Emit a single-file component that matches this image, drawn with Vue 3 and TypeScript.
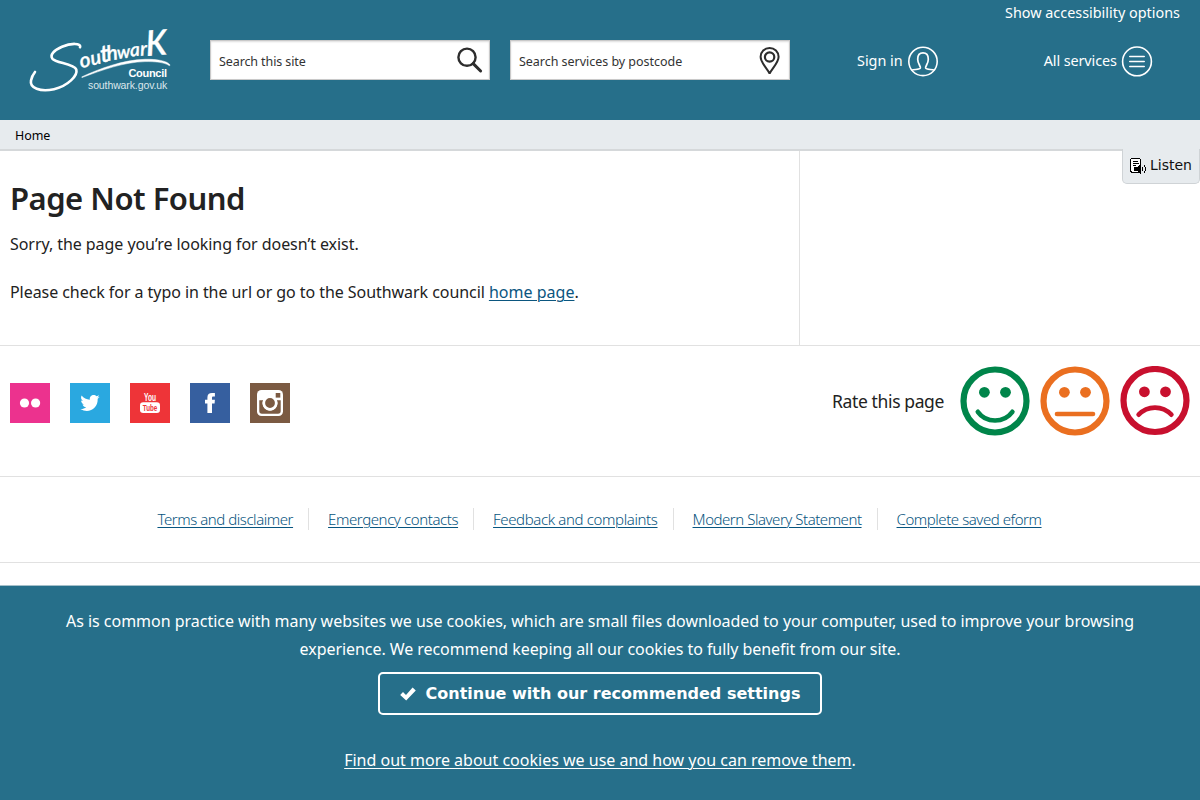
<script setup lang="ts">
interface FooterLink { label: string; tight: string }

const footerLinks: FooterLink[] = [
  { label: 'Terms and disclaimer', tight: 'terms' },
  { label: 'Emergency contacts', tight: 'emergency' },
  { label: 'Feedback and complaints', tight: 'feedback' },
  { label: 'Modern Slavery Statement', tight: 'slavery' },
  { label: 'Complete saved eform', tight: 'eform' },
]
</script>

<template>
  <div class="page">
    <header class="header">
      <svg class="logo" viewBox="0 0 160 80" width="160" height="80" role="img" aria-label="Southwark Council">
        <path class="swash" d="M60 27.2 C61.5 23 51 22.8 42 26.8 C34 30.3 29.5 35 32.5 38.8 C36 43 54 43.5 56.3 49.5 C58 55.5 48 66 34 69.2 C20 72.2 9.5 68 11 60.5 C11.6 57.5 13.2 54.2 15 52" />
        <path class="tail" d="M61.7 56.9 C80 48.5 103 39.9 125 39.3 C137 39 147 41 149.8 44.6 C150.2 45.5 149.8 45.9 149 45.4 C144 42.3 135 41.4 125 41.6 C104 42.1 82 50 62 57.6 Z" />
        <g class="script">
          <text transform="translate(61 48.2) rotate(-13)" font-size="21">o</text>
          <text transform="translate(71.7 45.4) rotate(-12)" font-size="20">u</text>
          <text transform="translate(81.6 42.6) rotate(-9)" font-size="24">t</text>
          <text transform="translate(87.6 41) rotate(-9)" font-size="21">h</text>
          <text transform="translate(97.7 39) rotate(-7)" font-size="18">w</text>
          <text transform="translate(110.6 36.6) rotate(-5)" font-size="19">a</text>
          <text transform="translate(120.4 35.7) rotate(-4)" font-size="20">r</text>
          <text transform="translate(126.6 36) rotate(-4)" font-size="35" textLength="21" lengthAdjust="spacingAndGlyphs">K</text>
        </g>
        <text class="council" x="147" y="57" text-anchor="end" textLength="38.6">Council</text>
        <text class="domain" x="147.3" y="69" text-anchor="end" textLength="79.3">southwark.gov.uk</text>
      </svg>
      <div class="search first">
        <span class="s-site">Search this site</span>
        <svg viewBox="0 0 28 28" width="28" height="28"><circle cx="11" cy="11.2" r="8.6" /><path d="M17.2 17.6 L24.6 25" stroke-width="3" stroke-linecap="round" /></svg>
      </div>
      <div class="search">
        <span class="s-post">Search services by postcode</span>
        <svg viewBox="0 0 28 28" width="28" height="28"><path d="M13.6 27.6 C11 22.1 4.6 16.8 4.6 10.8 A9 8.9 0 0 1 22.6 10.8 C22.6 16.8 16.2 22.1 13.6 27.6Z" stroke-width="2" /><circle cx="13.6" cy="11" r="4.7" stroke-width="2.2" /></svg>
      </div>
      <a class="head-link sign"><span>Sign in</span>
        <svg viewBox="0 0 32 32" width="32" height="32"><circle cx="16" cy="16.4" r="14.2" stroke-width="1.6" /><path d="M4.5 25.2 C8 24.2 12.8 24.6 13.3 23 C13.8 20.9 10.7 18.9 10.7 14.2 C10.7 9.9 12.8 7.9 16 7.9 C19.2 7.9 21.3 9.9 21.3 14.2 C21.3 18.9 18.2 20.9 18.7 23 C19.2 24.6 24 24.2 27.5 25.2" stroke-width="1.7" /></svg>
      </a>
      <a class="head-link services"><span>All services</span>
        <svg viewBox="0 0 32 32" width="32" height="32"><circle cx="16" cy="16.4" r="14.4" stroke-width="1.6" /><path d="M8.8 11.5H23.2M8.8 16.5H23.2M8.8 21.5H23.2" stroke-width="1.6" stroke-linecap="round" /></svg>
      </a>
      <a class="access">Show accessibility options</a>
    </header>

    <nav class="crumbs"><span>Home</span>
      <button class="listen">
        <svg viewBox="0 0 17 17" width="17" height="17" shape-rendering="crispEdges">
          <path d="M1.5 0.5H9.5L10.5 1.5V14.5H2.5L0.5 13.5V1.5Z" fill="#fff" stroke="#000" stroke-width="1" />
          <path d="M3 3.5H8M3 5.5H9M3 7.5H6" stroke="#000" stroke-width="1" />
          <path d="M4 9H7L11 5V16H10L7 13H4Z" fill="#000" />
          <path d="M12.5 9V13M14.5 7V9M15.5 9V13M14.5 13V15" fill="none" stroke="#000" stroke-width="1" />
        </svg>
        <span>Listen</span>
      </button>
    </nav>

    <main class="content">
      <section class="article">
        <h1>Page Not Found</h1>
        <p>Sorry, the page you’re looking for doesn’t exist.</p>
        <p>Please check for a typo in the url or go to the Southwark council <a>home page</a>.</p>
      </section>
    </main>

    <section class="social">
      <div class="networks">
        <svg class="flickr" viewBox="0 0 40 40"><circle cx="14.5" cy="20" r="4.6" /><circle cx="25.6" cy="20" r="4.6" /></svg>
        <svg class="twitter" viewBox="0 0 40 40"><path d="M29.7 13.7c-.7.3-1.5.6-2.3.7.8-.5 1.4-1.3 1.7-2.2-.8.5-1.6.8-2.5 1-2.6-2.7-7.4-.9-6.8 3.6-3.3-.2-6.2-1.7-8.2-4.2-1.1 1.8-.5 4.2 1.3 5.4-.7 0-1.2-.2-1.8-.5 0 1.9 1.3 3.5 3.2 4-.6.1-1.2.1-1.8 0 .5 1.6 2 2.7 3.7 2.8-1.7 1.3-3.7 1.9-5.8 1.7 8.3 5.1 17.8-.6 17.3-10.3.8-.5 1.5-1.2 2-2z" /></svg>
        <svg class="youtube" viewBox="0 0 40 40"><text x="14" y="18" font-size="11.5" textLength="12" lengthAdjust="spacingAndGlyphs">You</text><rect x="10" y="19.3" width="20" height="10.7" rx="3.2" /><text class="tube" x="12.8" y="28" font-size="9.8" textLength="14.5" lengthAdjust="spacingAndGlyphs">Tube</text></svg>
        <svg class="facebook" viewBox="0 0 40 40"><path d="M17.4 30V20.4H15V16.8H17.4V14.5C17.4 11.4 19.1 10 22 10H24.9V13.4H23.4C22.4 13.4 22 13.9 22 14.8V16.8H24.9L24.6 20.4H22V30Z" /></svg>
        <svg class="instagram" viewBox="0 0 40 40"><rect x="7" y="7" width="26" height="26" rx="4.5" /><path class="cut" d="M9.3 17.2H13.1A7.5 7.5 0 1 0 26.9 17.2H30.7V28A2.7 2.7 0 0 1 28 30.7H12A2.7 2.7 0 0 1 9.3 28Z" /><circle class="ring" cx="20" cy="20" r="6.2" /><rect class="cut" x="25.7" y="10" width="4.6" height="4.6" /></svg>
      </div>
      <div class="rate">
        <span>Rate this page</span>
        <svg class="good" viewBox="0 0 70 70"><circle class="face" cx="35" cy="35" r="31.5" /><circle cx="24.4" cy="26.3" r="5.4" /><circle cx="45.5" cy="26.3" r="5.4" /><path d="M17.8 45.8 C26 57.3 44 57.3 52.4 45.8" /></svg>
        <svg class="ok" viewBox="0 0 70 70"><circle class="face" cx="35" cy="35" r="31.5" /><circle cx="24.4" cy="26.3" r="5.4" /><circle cx="45.5" cy="26.3" r="5.4" /><path d="M17 48 H53" /></svg>
        <svg class="bad" viewBox="0 0 70 70"><circle class="face" cx="35" cy="34.5" r="31.5" /><circle cx="24.4" cy="25.8" r="5.4" /><circle cx="45.5" cy="25.8" r="5.4" /><path d="M18.6 48.7 C27.6 39.2 42.4 39.2 51.4 48.7" /></svg>
      </div>
    </section>

    <footer class="links">
      <a v-for="link in footerLinks" :key="link.label" :class="link.tight"><span>{{ link.label }}</span></a>
    </footer>

    <aside class="cookies">
      <p><span class="l1">As is common practice with many websites we use cookies, which are small files downloaded to your computer, used to improve your browsing</span><br><span class="l2">experience. We recommend keeping all our cookies to fully benefit from our site.</span></p>
      <button class="accept">
        <svg viewBox="0 0 16 14" width="16" height="14"><path d="M0.2 8 L3 5 L6 7.9 L12.6 0.6 L15.8 3.6 L6.2 13.6 Z" /></svg>
        <span>Continue with our recommended settings</span>
      </button>
      <p class="more"><a>Find out more about cookies we use and how you can remove them</a>.</p>
    </aside>
  </div>
</template>

<style>
body { margin: 0; background: #fff; }
</style>

<style scoped>
.page { width: 1200px; height: 800px; overflow: hidden; display: flex; flex-direction: column; font-family: "Noto Sans", "Open Sans", sans-serif; color: #222; }
.page * { box-sizing: border-box; }
p, h1 { margin: 0; }
button { margin: 0; padding: 0; background: none; border: 0; color: inherit; }
svg { display: block; flex: none; }

.header { position: relative; flex: none; height: 120px; background: #266f8a; color: #fff; display: flex; align-items: flex-start; padding: 20px 0 0 20px; }
.swash { fill: none; stroke: #fff; stroke-width: 2.6; stroke-linecap: round; }
.tail { fill: #fff; stroke: #fff; stroke-width: .5; }
.script text { font-family: Lato, sans-serif; font-style: italic; font-weight: 600; fill: #fff; stroke: #fff; stroke-width: .3; }
.council { font: 700 11px "Liberation Sans", sans-serif; fill: #fff; }
.domain { font: 10.5px "Liberation Sans", sans-serif; fill: #dbe8ed; }
.search { width: 280px; height: 40px; margin: 20px 20px 0 0; background: #fff; border: 1px solid #c9c9c9; box-shadow: inset 0 1px 2px #ddd; color: #333; display: flex; align-items: center; justify-content: space-between; padding: 3px 5px 0 8px; font-size: 12.5px; }
.search.first { margin-left: 30px; }
.search svg { fill: none; stroke: #2d2d2d; stroke-width: 2.4; margin-top: -3px; }
.s-site { letter-spacing: -.1px; }
.s-post { letter-spacing: -.03px; }
.head-link { display: flex; align-items: center; gap: 4px; height: 32px; margin-top: 25px; font-size: 14.4px; }
.head-link svg { fill: none; stroke: #fff; }
.head-link span { margin-top: -2px; }
.sign { margin-left: 47px; }
.services { margin-left: 105px; letter-spacing: -.1px; }
.access { position: absolute; right: 20px; top: 3px; font-size: 14.4px; line-height: 20px; }

.crumbs { position: relative; flex: none; height: 31px; background: #e7ebee; border-bottom: 2px solid #d5d8da; padding-left: 15px; font-size: 12.5px; line-height: 31px; color: #000; letter-spacing: -.1px; }
.listen { position: absolute; right: 0; top: 29px; width: 78px; height: 35px; background: #e7ebee; border: 1px solid #cfd3d6; border-top: 0; border-radius: 0 0 5px 5px; display: flex; align-items: center; gap: 3px; padding: 0 0 2px 7px; color: #111; font: 14px/20px "DejaVu Sans", sans-serif; }
.listen svg { margin-top: 2px; }

.content { flex: none; height: 195px; border-bottom: 1px solid #e1e1e1; }
.article { width: 800px; height: 194px; border-right: 1px solid #e1e1e1; padding: 23px 10px 0; }
h1 { font-size: 31px; font-weight: 600; line-height: 48px; letter-spacing: -.5px; margin-bottom: 10px; }
.article p { font-size: 16px; line-height: 24px; letter-spacing: -.06px; margin-bottom: 24px; }
.article a { color: #0b567f; letter-spacing: .02px; text-decoration: underline; text-underline-offset: 2px; text-decoration-thickness: 1px; }

.social { flex: none; height: 131px; border-bottom: 1px solid #e1e1e1; display: flex; justify-content: space-between; padding: 20px 10px 0; }
.networks { display: flex; gap: 20px; padding-top: 17px; }
.networks svg { width: 40px; height: 40px; fill: #fff; }
.flickr { background: #ec328e; }
.twitter { background: #2aa8e0; }
.youtube { background: #ee3438; }
.youtube text { font-family: "Liberation Sans", sans-serif; font-weight: 700; fill: #fff; }
.youtube .tube { fill: #ee3438; }
.facebook { background: #365f9f; }
.instagram { background: #7b5a42; }
.instagram .cut { fill: #7b5a42; }
.instagram .ring { fill: #7b5a42; stroke: #fff; stroke-width: 2.6; }
.rate { display: flex; gap: 10px; height: 70px; align-items: center; }
.rate span { font-size: 17.5px; letter-spacing: -.38px; margin-right: 6px; }
.rate svg { width: 70px; height: 70px; }
.rate .face, .rate path { fill: none; stroke: currentColor; stroke-width: 6.2; }
.rate path { stroke-width: 4.6; stroke-linecap: round; }
.rate circle { fill: currentColor; }
.good { color: #00854a; }
.ok { color: #ea6f20; }
.bad { color: #c8102e; }

.links { flex: none; height: 86px; border-bottom: 1px solid #e1e1e1; display: flex; justify-content: center; padding: 31px 5px 0 0; }
.links a { height: 22px; padding: 0 15px 0 19px; border-right: 1px solid #e1e1e1; font-size: 15px; font-weight: 300; line-height: 22px; color: #075580; text-decoration: underline; text-underline-offset: 2px; text-decoration-thickness: 1px; white-space: nowrap; }
.links a:last-child { border: 0; }
.terms { letter-spacing: -.45px; }
.emergency { letter-spacing: -.41px; }
.feedback { letter-spacing: -.37px; }
.slavery { letter-spacing: -.47px; }
.eform { letter-spacing: -.45px; }

.cookies { flex: 1; margin-top: 22px; border-top: 1px solid #a5c0ca; background: #266f8a; color: #fff; display: flex; flex-direction: column; align-items: center; text-align: center; font-size: 16px; line-height: 28px; padding-top: 21px; white-space: nowrap; }
.l1 { letter-spacing: -.02px; }
.l2 { letter-spacing: -.06px; }
.accept { margin-top: 9px; width: 444px; height: 43px; border: 2px solid #fff; border-radius: 5px; display: flex; align-items: center; justify-content: center; gap: 10px; font: 700 16px/20px "DejaVu Sans", sans-serif; }
.accept svg { fill: #fff; }
.more { margin-top: 31px; }
.more a { text-decoration: underline; text-underline-offset: 2px; text-decoration-thickness: 1px; }
</style>
